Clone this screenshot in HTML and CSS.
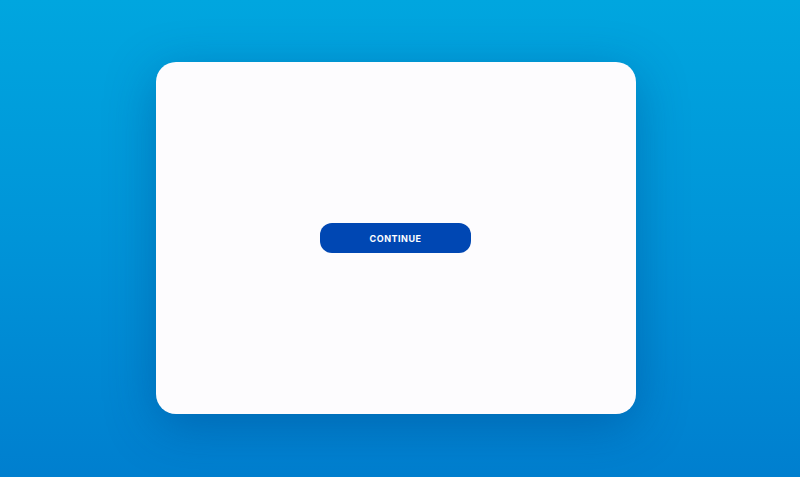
FILE: index.html
```html
<!DOCTYPE html>
<html lang="en">
<head>
<meta charset="utf-8">
<title>Continue</title>
<link rel="stylesheet" href="styles.css">
</head>
<body>
<main class="stage">
  <section class="card">
    <button class="btn" type="button">CONTINUE</button>
  </section>
</main>
</body>
</html>
```
FILE: styles.css
```css
html, body {
  margin: 0;
  padding: 0;
  height: 100%;
}
body {
  background: linear-gradient(180deg, #00a6df 0%, #0094d8 50%, #007fcf 100%);
  font-family: Inter, "Liberation Sans", sans-serif;
}
.stage {
  height: 477px;
  display: flex;
  align-items: flex-start;
  justify-content: center;
  padding: 62px 8px 0 0;
  box-sizing: border-box;
}
.card {
  width: 480px;
  height: 352px;
  background: #fdfcfe;
  border-radius: 20px;
  box-shadow: 0 12px 50px rgba(0, 50, 120, 0.35);
  display: flex;
  align-items: center;
  justify-content: center;
}
.btn {
  width: 151px;
  height: 30px;
  margin-left: -1px;
  border: none;
  border-radius: 12px;
  background: #0047b3;
  color: #ffffff;
  font-family: Inter, "Liberation Sans", sans-serif;
  font-weight: 700;
  font-size: 9px;
  letter-spacing: 0.5px;
  padding: 0;
  cursor: pointer;
}
```
